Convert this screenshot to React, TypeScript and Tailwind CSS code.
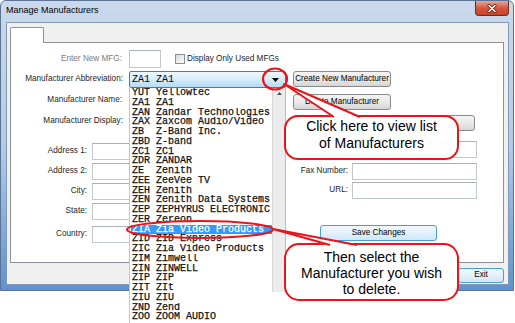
import React from "react";

const items: [string, string][] = [
  ["YUT", "Yellowtec"],
  ["ZA1", "ZA1"],
  ["ZAN", "Zandar Technologies"],
  ["ZAX", "Zaxcom Audio/Video"],
  ["ZB", "Z-Band Inc."],
  ["ZBD", "Z-band"],
  ["ZC1", "ZC1"],
  ["ZDR", "ZANDAR"],
  ["ZE", "Zenith"],
  ["ZEE", "ZeeVee TV"],
  ["ZEH", "Zenith"],
  ["ZEN", "Zenith Data Systems"],
  ["ZEP", "ZEPHYRUS ELECTRONIC"],
  ["ZER", "Zereon"],
  ["ZIA", "Zia Video Products"],
  ["ZID", "ZID Express"],
  ["ZIC", "Zia Video Products"],
  ["ZIM", "Zimwell"],
  ["ZIN", "ZINWELL"],
  ["ZIP", "ZIP"],
  ["ZIT", "ZIt"],
  ["ZIU", "ZIU"],
  ["ZND", "Zend"],
  ["ZOO", "ZOOM AUDIO"],
];

function Btn({
  children,
  className = "",
  blue = false,
}: {
  children?: React.ReactNode;
  className?: string;
  blue?: boolean;
}) {
  return (
    <div
      className={`flex shrink-0 items-center justify-center whitespace-nowrap rounded-[3px] border text-[8.2px] text-black ${
        blue
          ? "border-[#4c9ed9] bg-gradient-to-b from-[#f1f8fd] via-[#e3f1fb] to-[#cde7f8]"
          : "border-[#8a8a8a] bg-gradient-to-b from-[#f4f4f4] via-[#e9e9e9] to-[#d6d6d6]"
      } ${className}`}
    >
      {children}
    </div>
  );
}

function Input({ className = "" }: { className?: string }) {
  return (
    <div
      className={`shrink-0 border border-[#c3c8d0] border-t-[#abb0b8] bg-white ${className}`}
    />
  );
}

export default function App() {
  const mono = { fontFamily: '"Liberation Mono", "Courier New", monospace' };
  return (
    <div
      className="relative h-[323px] w-[515px] overflow-hidden bg-white text-[8.2px] text-[#1e1e1e]"
      style={{ fontFamily: '"Liberation Sans", Arial, sans-serif' }}
    >
      {/* Window */}
      <div className="flex h-[291px] w-[514px] flex-col rounded-t-[6px] border border-[#5b7494] bg-gradient-to-b from-[#cad9ec] via-[#b3cbe8] to-[#5f92d2]">
        {/* Title bar */}
        <div className="flex h-[21px] items-start justify-between">
          <span className="ml-[5px] mt-[4px] text-[9px] leading-[11px] text-black">
            Manage Manufacturers
          </span>
          <div className="mr-[4px] flex h-[15px] w-[34px] items-center justify-center rounded-b-[4px] border border-t-0 border-[#6e2a1f] bg-gradient-to-b from-[#e7a595] via-[#d3583f] to-[#c7432a]">
            <svg width="10" height="9" viewBox="0 0 10 9">
              <path d="M2 1.5 L8 7.5 M8 1.5 L2 7.5" stroke="#5a1a12" strokeWidth="3" strokeLinecap="round" />
              <path d="M2 1.5 L8 7.5 M8 1.5 L2 7.5" stroke="#ffffff" strokeWidth="1.6" strokeLinecap="round" />
            </svg>
          </div>
        </div>

        {/* Client area */}
        <div className="mb-[5px] ml-[5px] mr-[4px] flex flex-1 flex-col border border-[#8398b4] bg-[#f0f0f0]">
          {/* Tab header */}
          <div className="relative z-10 -mb-px ml-[3px] mt-[4px] h-[16px] w-[34px] rounded-t-[2px] border border-b-0 border-[#8e9198] bg-white" />
          {/* Panel */}
          <div className="ml-[3px] flex h-[221px] w-[494px] border border-[#8e9198] bg-white">
            {/* Left column */}
            <div className="flex w-[279px] flex-col">
              <div className="mt-[7px] flex h-[18px] items-center">
                <span className="w-[111px] text-right text-[#7a7a7a]">Enter New MFG:</span>
                <Input className="ml-[7px] h-[18px] w-[32px]" />
                <div className="ml-[14px] h-[10px] w-[10px] border border-[#8f8f8f] bg-gradient-to-br from-[#dcdcdc] to-[#fbfbfb]" />
                <span className="ml-[2px] whitespace-nowrap">Display Only Used MFGs</span>
              </div>
              <div className="mt-[3px] flex h-[17px] items-center">
                <span className="w-[112px] whitespace-nowrap text-right">Manufacturer Abbreviation:</span>
                <div className="relative ml-[6px] h-[17px] w-[157px]">
                  <div className="flex h-full w-full items-center justify-between rounded-[2px] border border-[#3c7fb1] bg-gradient-to-b from-[#eef7fd] via-[#d6ecfa] to-[#b2dbf4] pl-[2px] pr-[6px]">
                    <span className="whitespace-pre text-[10px] leading-[12px] text-black" style={mono}>
                      ZA1 ZA1
                    </span>
                    <svg width="7" height="4" viewBox="0 0 7 4">
                      <path d="M0 0 H7 L3.5 4 Z" fill="#000" />
                    </svg>
                  </div>
                  {/* Dropdown list */}
                  <div className="absolute left-0 top-[17px] z-20 h-[240px] w-[157px] border-l border-[#c6c6c6] bg-white">
                    <div className="flex flex-col pl-px">
                      {items.map(([c, n], i) => (
                        <div
                          key={i}
                          className={`h-[9.75px] w-[141px] overflow-hidden whitespace-pre pl-[1px] text-[10px] leading-[9.75px] ${
                            c === "ZIA" ? "bg-[#3399ff] text-white" : "text-[#111111]"
                          }`}
                          style={{ ...mono, WebkitTextStroke: "0.25px currentColor" }}
                        >
                          {c.padEnd(4, " ") + n}
                        </div>
                      ))}
                    </div>
                    <div className="absolute right-0 top-0 flex h-[204px] w-[14px] justify-center border-l border-r border-[#d8d8d8] border-r-[#bdbdbd] bg-[#ececec] pt-[4px]">
                      <svg width="5" height="3" viewBox="0 0 5 3">
                        <path d="M0 3 L2.5 0 L5 3 Z" fill="#505050" />
                      </svg>
                    </div>
                  </div>
                </div>
              </div>
              <div className="mt-[4px] flex h-[17px] items-center">
                <span className="w-[111px] text-right">Manufacturer Name:</span>
                <Input className="ml-[7px] h-[17px] w-[157px]" />
              </div>
              <div className="mt-[4px] flex h-[17px] items-center">
                <span className="w-[112px] whitespace-nowrap text-right">Manufacturer Display:</span>
                <Input className="ml-[6px] h-[17px] w-[157px]" />
              </div>
              {["Address 1:", "Address 2:", "City:", "State:", "Country:"].map((l, i) => (
                <div
                  key={l}
                  className={`flex h-[17px] items-center ${
                    i === 0 ? "mt-[13px]" : i === 4 ? "mt-[6px]" : "mt-[3px]"
                  }`}
                >
                  <span className="w-[76px] text-right">{l}</span>
                  <Input className="ml-[5px] h-[17px] w-[150px]" />
                </div>
              ))}
            </div>

            {/* Right column */}
            <div className="flex flex-1 flex-col">
              <Btn className="ml-[3px] mt-[28px] h-[16px] w-[98px]">Create New Manufacturer</Btn>
              <Btn className="ml-[3px] mt-[7px] h-[16px] w-[98px]">Delete Manufacturer</Btn>
              <Btn className="ml-[3px] mt-[5px] h-[16px] w-[182px]" />
              <div className="mt-[10px] flex h-[17px] items-center">
                <span className="w-[58px]" />
                <Input className="ml-[4px] h-[17px] w-[125px]" />
              </div>
              <div className="mt-[5px] flex h-[17px] items-center">
                <span className="w-[58px] whitespace-nowrap text-right">Fax Number:</span>
                <Input className="ml-[4px] h-[17px] w-[125px]" />
              </div>
              <div className="mt-[2px] flex h-[17px] items-center">
                <span className="w-[58px] text-right">URL:</span>
                <Input className="ml-[4px] h-[17px] w-[125px]" />
              </div>
              <Btn blue className="ml-[30px] mt-[26px] h-[16px] w-[117px]">
                Save Changes
              </Btn>
            </div>
          </div>
          {/* Bottom strip */}
          <div className="flex flex-1 items-start justify-end pr-[4px] pt-[5px]">
            <Btn blue className="h-[15px] w-[46px]">
              Exit
            </Btn>
          </div>
        </div>
      </div>

      {/* Annotations */}
      <svg
        className="pointer-events-none absolute left-0 top-0 z-30"
        width="515"
        height="323"
        viewBox="0 0 515 323"
      >
        <ellipse cx="275" cy="79" rx="12" ry="10.5" fill="none" stroke="#e8151b" strokeWidth="2.2" />
        <rect x="285" y="116" width="173" height="43" rx="13" fill="#ffffff" stroke="#e8151b" strokeWidth="2" />
        <polygon points="284,84 334,118 360,118" fill="#ffffff" />
        <polyline points="334,117 284,84 360,117" fill="none" stroke="#e8151b" strokeWidth="2" strokeLinejoin="round" />

        <ellipse cx="200" cy="229.5" rx="73" ry="8.5" fill="none" stroke="#e8151b" strokeWidth="2.2" />
        <rect x="285" y="244" width="173" height="56" rx="14" fill="#ffffff" stroke="#e8151b" strokeWidth="2" />
        <polygon points="273,229 330,246 357,246" fill="#ffffff" />
        <polyline points="330,245 273,229 357,245" fill="none" stroke="#e8151b" strokeWidth="2" strokeLinejoin="round" />
      </svg>
      <div className="absolute left-[285px] top-[118px] z-40 w-[173px] text-center text-[14px] leading-[17px] text-black">
        <div>Click here to view list</div>
        <div>of Manufacturers</div>
      </div>
      <div className="absolute left-[285px] top-[249px] z-40 w-[173px] text-center text-[14px] leading-[16px] text-black">
        <div>Then select the</div>
        <div>Manufacturer you wish</div>
        <div>to delete.</div>
      </div>
    </div>
  );
}
